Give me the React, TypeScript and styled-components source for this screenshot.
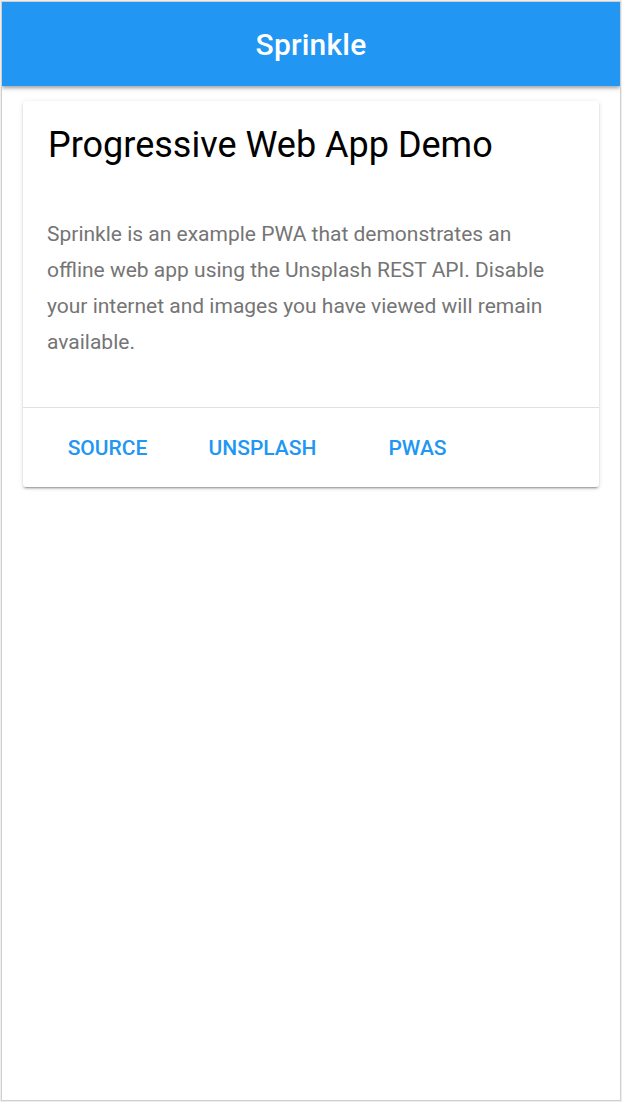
import React from "react";
import styled, { createGlobalStyle } from "styled-components";

const Global = createGlobalStyle`
  html, body { margin: 0; padding: 0; background: #eeeeee; }
  body { font-family: Roboto, "Noto Sans", Arial, sans-serif; }
  * { box-sizing: border-box; }
`;

const Frame = styled.div`
  margin: 1px;
  height: 1100px;
  border: 1px solid #cfcfcf;
  background: #ffffff;
  display: flex;
  flex-direction: column;
  overflow: hidden;
`;

const Header = styled.header`
  height: 84px;
  flex-shrink: 0;
  background: #2196f3;
  display: flex;
  align-items: center;
  justify-content: center;
  box-shadow: 0 2px 3px rgba(0, 0, 0, 0.25), 0 3px 5px rgba(0, 0, 0, 0.12);
  position: relative;
  z-index: 1;
`;

const AppTitle = styled.h1`
  margin: 0;
  color: #ffffff;
  font-size: 30px;
  font-weight: 500;
  letter-spacing: 0.2px;
`;

const Main = styled.main`
  padding: 15px 21px 0 21px;
`;

const Card = styled.section`
  background: #ffffff;
  border-radius: 3px;
  box-shadow: 0 2px 2px rgba(0, 0, 0, 0.14), 0 3px 1px -2px rgba(0, 0, 0, 0.2),
    0 1px 5px rgba(0, 0, 0, 0.12);
  display: flex;
  flex-direction: column;
`;

const CardTitle = styled.h2`
  margin: 0;
  padding: 22px 24px 0 25px;
  font-size: 36px;
  font-weight: 400;
  color: #000000;
  line-height: 44px;
`;

const CardText = styled.p`
  margin: 0;
  padding: 49px 50px 47px 24px;
  font-size: 21px;
  line-height: 36px;
  color: #757575;
`;

const Actions = styled.div`
  border-top: 1px solid #e0e0e0;
  height: 80px;
  display: flex;
  align-items: center;
  padding-left: 7px;
`;

const ActionButton = styled.a`
  width: 155px;
  text-align: center;
  font-size: 21px;
  font-weight: 500;
  color: #2196f3;
  text-transform: uppercase;
  text-decoration: none;
  line-height: 36px;
`;

export default function App() {
  return (
    <>
      <Global />
      <Frame>
        <Header>
          <AppTitle>Sprinkle</AppTitle>
        </Header>
        <Main>
          <Card>
            <CardTitle>Progressive Web App Demo</CardTitle>
            <CardText>
              Sprinkle is an example PWA that demonstrates an offline web app
              using the Unsplash REST API. Disable your internet and images you
              have viewed will remain available.
            </CardText>
            <Actions>
              <ActionButton href="#">Source</ActionButton>
              <ActionButton href="#">Unsplash</ActionButton>
              <ActionButton href="#">PWAs</ActionButton>
            </Actions>
          </Card>
        </Main>
      </Frame>
    </>
  );
}
